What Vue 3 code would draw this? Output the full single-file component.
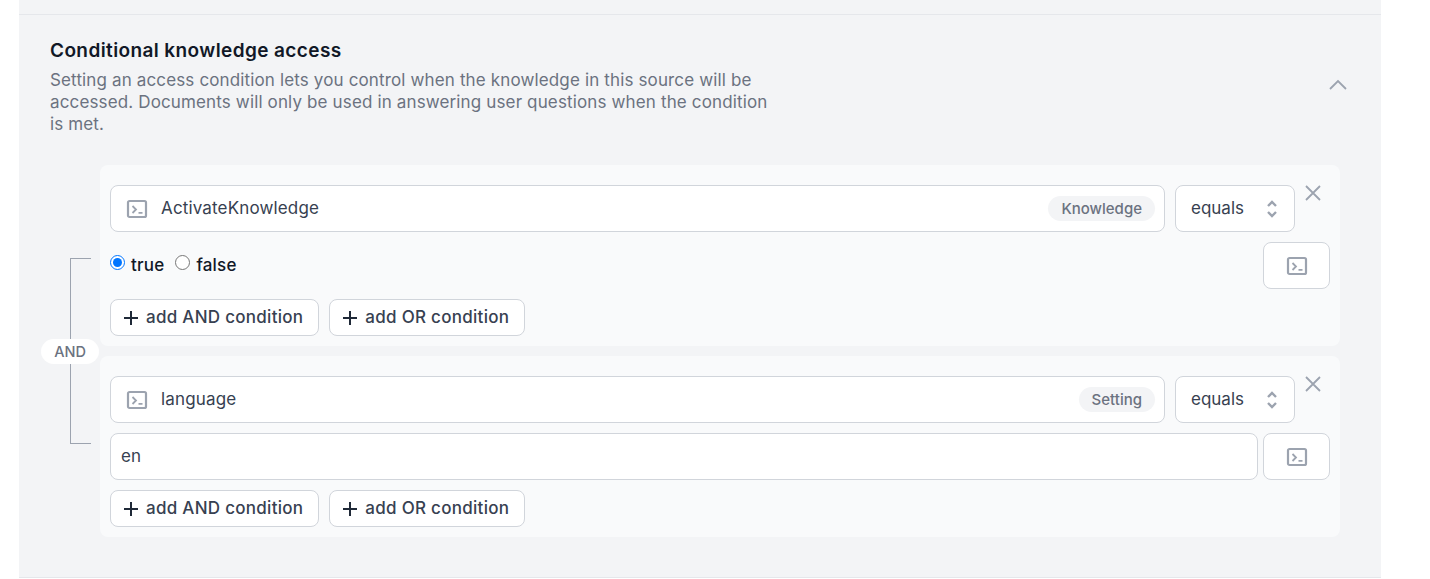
<script setup>
const conditions = [
  { name: 'ActivateKnowledge', tag: 'Knowledge', kind: 'bool' },
  { name: 'language', tag: 'Setting', kind: 'text', value: 'en' },
]
</script>

<template>
  <div class="page">
    <section class="panel">
      <div class="head">
        <div class="head-text">
          <h3>Conditional knowledge access</h3>
          <p>Setting an access condition lets you control when the knowledge in this source will be accessed. Documents will only be used in answering user questions when the condition is met.</p>
        </div>
        <svg class="chevron" width="20" height="20" viewBox="0 0 20 20" fill="none" stroke="#9ca3af" stroke-width="1.8">
          <path d="M2 14l8-8 8 8" />
        </svg>
      </div>

      <div class="group">
        <div class="bracket"></div>
        <span class="and-pill">AND</span>

        <div v-for="c in conditions" :key="c.name" class="card">
          <div class="row">
            <div class="field name-field">
              <svg class="term" viewBox="0 0 22 20" fill="none" stroke="#9ca3af" stroke-width="2.2">
                <rect x="2" y="2" width="18" height="16" rx="1.5" />
                <path stroke-width="1.8" d="M6.5 7l3.5 3.5L6.5 14M12.5 13.8h4" />
              </svg>
              <span class="name">{{ c.name }}</span>
              <span class="tag">{{ c.tag }}</span>
            </div>
            <div class="field select-field">
              <span>equals</span>
              <svg width="12" height="20" viewBox="0 0 12 20" fill="none" stroke="#9ca3af" stroke-width="2.4">
                <path d="M2 7l4-4 4 4M2 13l4 4 4-4" />
              </svg>
            </div>
            <svg class="close" width="16" height="16" viewBox="0 0 16 16" fill="none" stroke="#9ca3af" stroke-width="1.8">
              <path d="M1 1l14 14M15 1L1 15" />
            </svg>
          </div>

          <div class="row value-row">
            <div v-if="c.kind === 'bool'" class="radios">
              <label><input type="radio" name="active" checked />true</label>
              <label><input type="radio" name="active" />false</label>
            </div>
            <div v-else class="field value-field">{{ c.value }}</div>
            <button class="term-btn">
              <svg class="term" viewBox="0 0 22 20" fill="none" stroke="#9ca3af" stroke-width="2.2">
                <rect x="2" y="2" width="18" height="16" rx="1.5" />
                <path stroke-width="1.8" d="M6.5 7l3.5 3.5L6.5 14M12.5 13.8h4" />
              </svg>
            </button>
          </div>

          <div class="actions">
            <button class="add"><span class="plus"></span>add AND condition</button>
            <button class="add"><span class="plus"></span>add OR condition</button>
          </div>
        </div>
      </div>
    </section>
  </div>
</template>

<style>
html,
body {
  background: #fff;
  overflow: hidden;
}
</style>

<style scoped>
.page {
  height: 579px;
  padding-left: 19px;
  font-family: Inter, "Liberation Sans", sans-serif;
  box-sizing: border-box;
}

.panel {
  width: 1362px;
  height: 578px;
  box-sizing: border-box;
  background: #f3f4f6;
  border-bottom: 1px solid #e5e7eb;
  padding: 14px 0 0;
  position: relative;
}

.panel::before {
  content: "";
  display: block;
  height: 1px;
  background: #e5e7eb;
}

.head {
  display: flex;
  justify-content: space-between;
  padding: 25px 33px 0 31px;
}

.head-text {
  width: 722px;
}

h3 {
  margin: 0;
  font-size: 19px;
  line-height: 22px;
  font-weight: 560;
  letter-spacing: 0.4px;
  color: #111827;
}

p {
  margin: 7px 0 0;
  font-size: 17px;
  line-height: 22px;
  letter-spacing: 0.14px;
  color: #6b7280;
}

.chevron {
  margin-top: 35px;
}

.group {
  position: relative;
  margin: 30px 0 0 81px;
  width: 1240px;
  display: flex;
  flex-direction: column;
  gap: 10px;
}

.bracket {
  position: absolute;
  left: -30px;
  top: 93px;
  width: 20px;
  height: 184px;
  border: 1px solid #9ca3af;
  border-right: none;
}

.and-pill {
  position: absolute;
  left: -59px;
  top: 174px;
  width: 58px;
  height: 25px;
  border-radius: 13px;
  background: #fff;
  color: #6b7280;
  font-size: 14.5px;
  font-weight: 500;
  line-height: 25px;
  text-align: center;
}

.card {
  background: #f9fafb;
  border-radius: 8px;
  padding: 20px 10px 10px;
  height: 181px;
  box-sizing: border-box;
}

.row {
  display: flex;
  gap: 10px;
}

.value-row {
  margin-top: 10px;
  height: 47px;
  justify-content: space-between;
  gap: 5px;
}

.field {
  height: 47px;
  box-sizing: border-box;
  background: #fff;
  border: 1px solid #d1d5db;
  border-radius: 8px;
  display: flex;
  align-items: center;
  font-size: 17px;
  letter-spacing: 0.15px;
  color: #374151;
}

.name-field {
  width: 1055px;
  padding: 0 9px 0 15px;
}

.term {
  width: 22px;
  height: 20px;
  flex: none;
}

.name {
  flex: 1;
  margin: -2px 0 0 13px;
}

.tag {
  background: #f3f4f6;
  color: #6b7280;
  border-radius: 13px;
  font-size: 15px;
  font-weight: 500;
  letter-spacing: 0;
  line-height: 25px;
  padding: 0 13px;
}

.select-field {
  width: 120px;
  padding: 0 16px 0 15px;
  justify-content: space-between;
  letter-spacing: 0;
}

.select-field span {
  margin-top: -2px;
}

.close {
  flex: none;
}

.radios {
  display: flex;
  gap: 11px;
  padding-top: 10px;
  height: 26px;
}

.radios label {
  display: flex;
  align-items: center;
  gap: 6px;
  font-size: 17px;
  font-weight: 500;
  letter-spacing: 0.2px;
  color: #111827;
}

.radios input {
  width: 15px;
  height: 15px;
  margin: -5px 0 0;
}

.value-field {
  flex: 1;
  padding: 0 10px 2px;
}

.term-btn {
  width: 67px;
  height: 47px;
  flex: none;
  background: #fff;
  border: 1px solid #d1d5db;
  border-radius: 8px;
  display: flex;
  align-items: center;
  justify-content: center;
  padding: 0;
}

.actions {
  display: flex;
  gap: 10px;
  margin-top: 10px;
}

.add {
  height: 37px;
  box-sizing: border-box;
  background: #fff;
  border: 1px solid #d1d5db;
  border-radius: 8px;
  padding: 0 15px 2px 13px;
  display: flex;
  align-items: center;
  gap: 8px;
  font-family: inherit;
  font-size: 17px;
  font-weight: 500;
  letter-spacing: 0.28px;
  color: #374151;
}

.plus {
  position: relative;
  width: 14px;
  height: 14px;
  flex: none;
  top: 1px;
}

.plus::before,
.plus::after {
  content: "";
  position: absolute;
  background: #1f2937;
}

.plus::before {
  left: 0;
  right: 0;
  top: 6px;
  height: 2px;
}

.plus::after {
  top: 0;
  bottom: 0;
  left: 6px;
  width: 2px;
}
</style>
